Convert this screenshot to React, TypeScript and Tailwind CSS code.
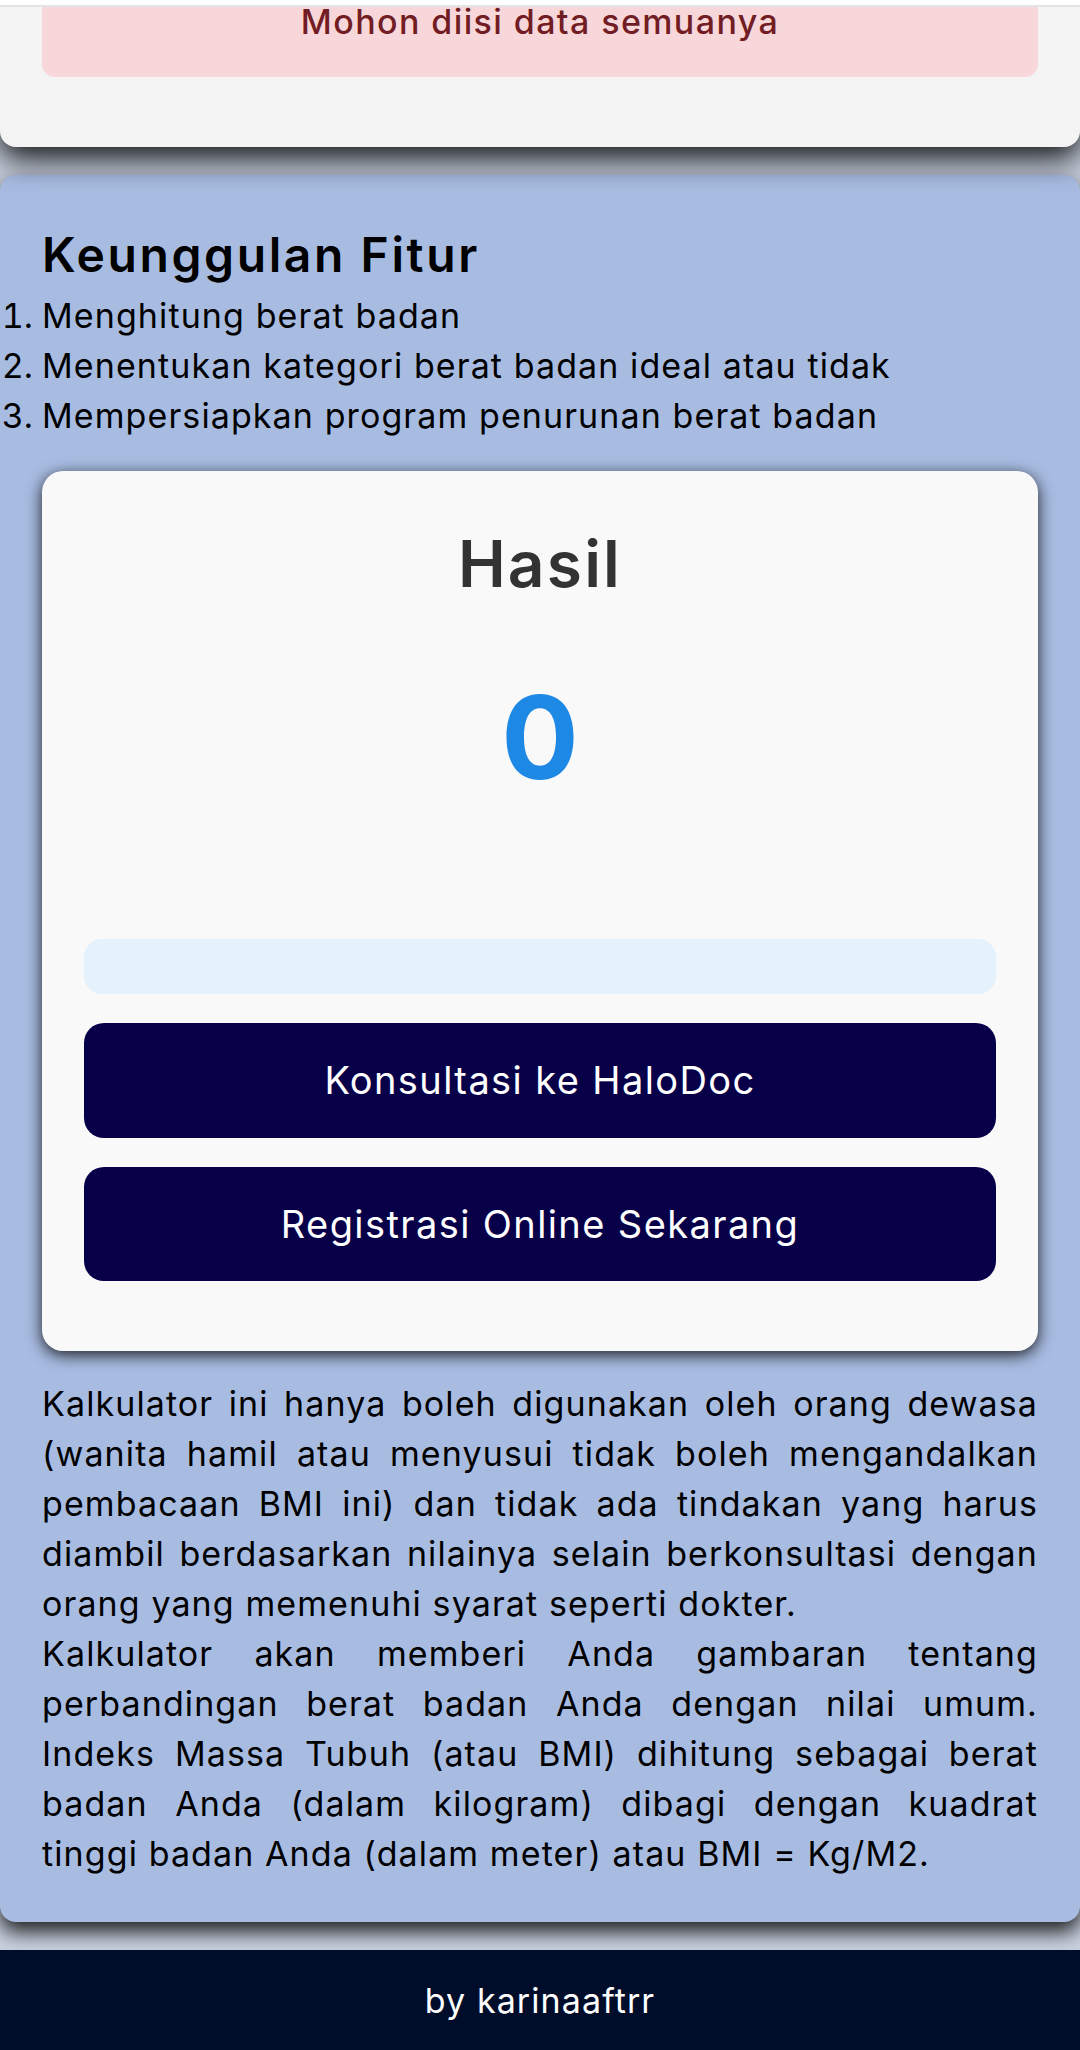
const FITUR = [
  "Menghitung berat badan",
  "Menentukan kategori berat badan ideal atau tidak",
  "Mempersiapkan program penurunan berat badan",
];

// lines are kept as in the original so the justified wrap stays the same
const INFO = [
  [
    "Kalkulator ini hanya boleh digunakan oleh orang dewasa",
    "(wanita hamil atau menyusui tidak boleh mengandalkan",
    "pembacaan BMI ini) dan tidak ada tindakan yang harus",
    "diambil berdasarkan nilainya selain berkonsultasi dengan",
    "orang yang memenuhi syarat seperti dokter.",
  ],
  [
    "Kalkulator akan memberi Anda gambaran tentang",
    "perbandingan berat badan Anda dengan nilai umum.",
    "Indeks Massa Tubuh (atau BMI) dihitung sebagai berat",
    "badan Anda (dalam kilogram) dibagi dengan kuadrat",
    "tinggi badan Anda (dalam meter) atau BMI = Kg/M2.",
  ],
];

function Paragraph({ lines }: { lines: string[] }) {
  return (
    <p>
      {lines.map((line, i) => (
        <span
          key={i}
          className={i < lines.length - 1 ? "block text-justify [text-align-last:justify]" : "block"}
        >
          {line}
        </span>
      ))}
    </p>
  );
}

function HasilCard() {
  return (
    <div className="mt-[30px] flex flex-col rounded-[21px] bg-[#f9f9f9] px-[42px] pt-[54px] pb-[70px] shadow-[0_4px_16px_rgba(0,0,0,0.85)]">
      <h3 className="text-center text-[64px] leading-[77px] font-semibold tracking-[2.2px] text-[#333333]">
        Hasil
      </h3>
      <p className="mt-[78px] text-center text-[115px] leading-[115px] font-bold text-[#1e88e5]">0</p>
      <div className="mt-[144px] h-[55px] rounded-[18px] bg-[#e3f2fd]" />
      <button className="mt-[29px] flex h-[115px] w-full items-center justify-center rounded-[20px] bg-[#070049] text-[38px] tracking-[1.4px] text-white">
        Konsultasi ke HaloDoc
      </button>
      <button className="mt-[29px] flex h-[114px] w-full items-center justify-center rounded-[20px] bg-[#070049] text-[38px] tracking-[1.4px] text-white">
        Registrasi Online Sekarang
      </button>
    </div>
  );
}

export default function App() {
  return (
    <div className="flex min-h-[2050px] flex-col bg-[#c9d2e0] font-[Inter,sans-serif] text-black">
      {/* edge of the header bar */}
      <div className="relative z-20 h-[7px] border-b-2 border-[#e4e4e4] bg-white" />

      {/* form card (scrolled, only the alert is left in view) */}
      <section className="relative z-10 rounded-b-[16px] bg-[#f4f4f4] pb-[70px] shadow-[0_12px_30px_rgba(0,0,0,0.9)]">
        <div className="mx-[42px] h-[70px] rounded-b-[13px] bg-[#f8d7da]">
          <p className="text-center text-[34px] leading-[30px] font-medium tracking-[1.4px] text-[#721c24]">
            Mohon diisi data semuanya
          </p>
        </div>
      </section>

      <section className="relative mt-[28px] rounded-[16px] bg-[#a8bce2] px-[42px] pt-[52px] pb-[43px] shadow-[0_10px_20px_rgba(0,0,0,0.85)]">
        <h2 className="text-[48px] leading-[56px] font-semibold tracking-[2.6px]">Keunggulan Fitur</h2>
        <ol className="mt-[8px] list-outside list-decimal text-[34px] leading-[50px] tracking-[1.1px] proportional-nums marker:tracking-normal">
          {FITUR.map((f) => (
            <li key={f}>{f}</li>
          ))}
        </ol>

        <HasilCard />

        <div className="mt-[28px] text-[34px] leading-[50px] tracking-[1.1px]">
          {INFO.map((lines, i) => (
            <Paragraph key={i} lines={lines} />
          ))}
        </div>
      </section>

      <footer className="mt-[28px] flex h-[100px] items-center justify-center bg-[#000d2a] text-[34px] tracking-[1.1px] text-white">
        by karinaaftrr
      </footer>
    </div>
  );
}
